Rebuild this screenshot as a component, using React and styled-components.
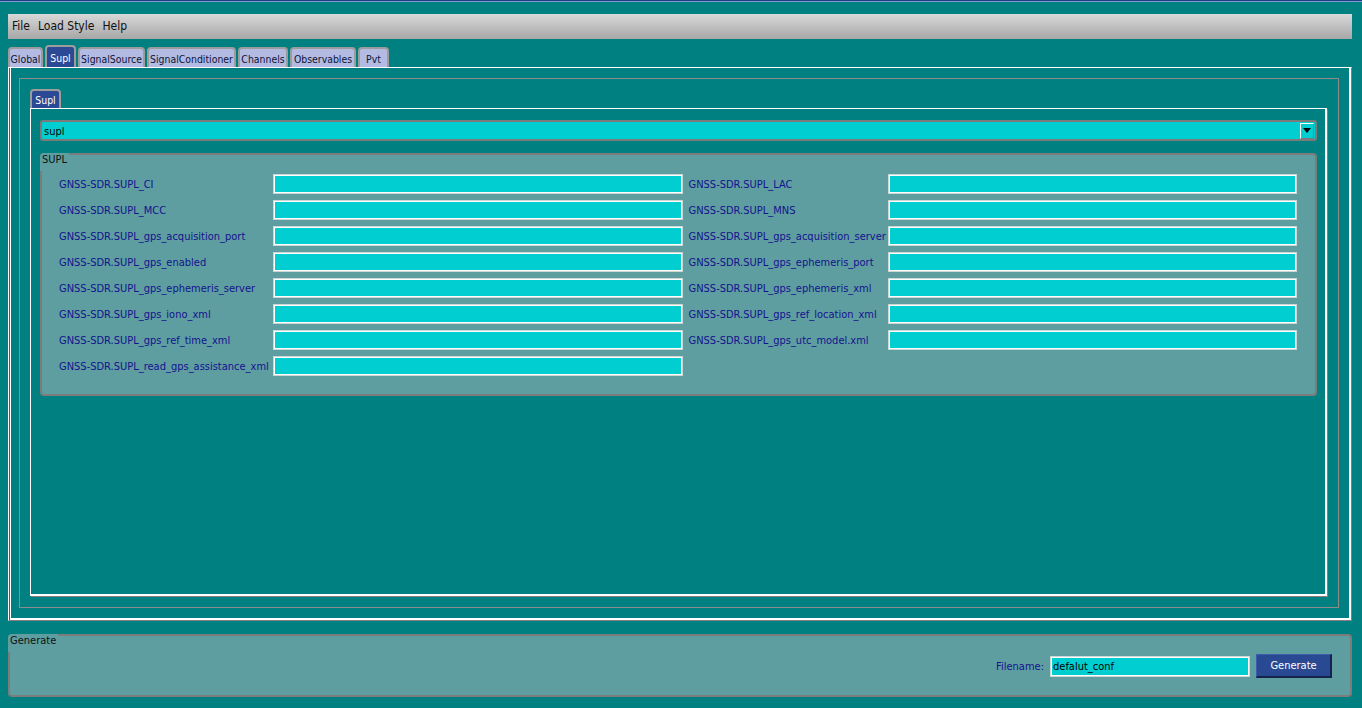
import React from 'react';
import styled, { createGlobalStyle } from 'styled-components';

const FONT = `"DejaVu Sans Condensed", "DejaVu Sans", "Liberation Sans", sans-serif`;

const GlobalStyle = createGlobalStyle`
  html, body { margin: 0; padding: 0; background: #008080; }
  body { font-family: ${FONT}; font-size: 11px; overflow: hidden; }
  * { box-sizing: border-box; }
`;

const Window = styled.div`
  width: 1362px;
  height: 708px;
  background: #008080;
  border-top: 1px solid #1f3f85;
  box-shadow: inset 0 1px 0 #7d9bc9;
  padding: 13px 10px 11px 8px;
  display: flex;
  flex-direction: column;
`;

const MenuBar = styled.div`
  height: 25px;
  display: flex;
  align-items: center;
  gap: 8px;
  padding-left: 4px;
  background: linear-gradient(#d8d8d8, #a7a7a7);
  font-size: 12px;
  color: #111;
`;

const MenuItem = styled.span`
  line-height: 25px;
`;

const TabBar = styled.div`
  display: flex;
  align-items: flex-end;
  gap: 2px;
  height: ${(p) => p.$h}px;
  margin-top: ${(p) => p.$mt || 0}px;
`;

const Tab = styled.div`
  flex: none;
  min-width: 0;
  width: ${(p) => p.$w}px;
  height: ${(p) => (p.$active ? p.$h + 2 : p.$h)}px;
  display: flex;
  align-items: center;
  justify-content: center;
  overflow: hidden;
  white-space: nowrap;
  font-size: 10.4px;
  border: 2px solid #9c9c9c;
  border-bottom: none;
  border-radius: 4px 4px 0 0;
  background: ${(p) => (p.$active ? '#2b4995' : '#b3bbe2')};
  color: ${(p) => (p.$active ? '#ffffff' : '#0e1236')};
  padding-top: 1px;
`;

const OuterPanel = styled.div`
  height: 556px;
  border-top: 1px solid #fff;
  border-left: 1px solid #fff;
  border-right: 1px solid #808080;
  border-bottom: 1px solid #808080;
  box-shadow: inset 1px 0 0 #008080, inset 2px 0 0 #fff, inset -2px -2px 0 #fff;
  padding: 10px 12px 12px 10px;
  display: flex;
`;

const Frame = styled.div`
  flex: 1;
  border: 1px solid #8c8c8c;
  padding: 10px;
  display: flex;
  flex-direction: column;
`;

const InnerPanel = styled.div`
  flex: 1;
  margin-right: 1px;
  margin-bottom: 1px;
  border-top: 1px solid #fff;
  border-left: 1px solid #fff;
  border-right: 2px solid #fff;
  border-bottom: 2px solid #fff;
  box-shadow: 1px 1px 0 #808080;
  padding: 11px 8px 8px 9px;
  display: flex;
  flex-direction: column;
`;

const Combo = styled.div`
  height: 21px;
  border: 2px solid #7b7b7b;
  border-radius: 3px;
  background: #00ced1;
  display: flex;
  align-items: center;
  justify-content: space-between;
  padding: 0 1px 0 2px;
  color: #000;
`;

const ComboText = styled.span`
  padding-top: 1px;
`;

const DropButton = styled.div`
  width: 14px;
  height: 16px;
  border-top: 1px solid #fff;
  border-left: 1px solid #fff;
  border-right: 1px solid #7a7a7a;
  border-bottom: 1px solid #7a7a7a;
  display: flex;
  align-items: center;
  justify-content: center;
`;

const Triangle = styled.div`
  width: 0;
  height: 0;
  border-left: 4px solid transparent;
  border-right: 4px solid transparent;
  border-top: 5px solid #000;
`;

const GroupBox = styled.div`
  position: relative;
  flex: none;
  background: #5f9ea0;
  border: 2px solid #7c7c7c;
  border-radius: 4px;
  margin-top: ${(p) => p.$mt || 0}px;
  height: ${(p) => p.$h}px;
`;

const Legend = styled.div`
  position: absolute;
  top: -2px;
  left: -2px;
  padding: 1px 2px 5px 2px;
  background: #5f9ea0;
  color: #0b1414;
  line-height: 12px;
  border-top-left-radius: 4px;
`;

const FieldGrid = styled.div`
  display: grid;
  grid-template-columns: 208px 1fr 193px 1fr;
  grid-auto-rows: 20px;
  column-gap: 6px;
  row-gap: 6px;
  padding: 19px 18px 17px 17px;
`;

const FieldLabel = styled.label`
  display: flex;
  align-items: center;
  color: #13138e;
  white-space: nowrap;
  grid-column: ${(p) => (p.$right ? 3 : 1)};
`;

const Field = styled.input`
  height: 20px;
  width: 100%;
  margin: 0;
  border: 1px solid #cfd6d6;
  box-shadow: inset 0 0 0 1px #ffffff;
  background: #00ced1;
  font: inherit;
  color: #000;
  padding: 0 2px;
  outline: none;
  grid-column: ${(p) => (p.$right ? 4 : 2)};
`;

const Spacer = styled.div`
  flex: 1;
`;

const GenerateRow = styled.div`
  height: 100%;
  display: flex;
  align-items: center;
  justify-content: flex-end;
  padding-right: 18px;
  padding-top: 1px;
`;

const FileLabel = styled.span`
  color: #13138e;
  margin-right: 6px;
`;

const FileInput = styled.input`
  width: 200px;
  height: 21px;
  margin: 0 6px 0 0;
  border: 1px solid #cfd6d6;
  box-shadow: inset 0 0 0 1px #ffffff;
  background: #00ced1;
  font: inherit;
  color: #000;
  padding: 0 2px;
  outline: none;
`;

const GenButton = styled.button`
  width: 76px;
  height: 24px;
  margin: 0;
  background: #2a4993;
  color: #fff;
  font: inherit;
  border-top: 1px solid #3b5cab;
  border-left: 1px solid #3b5cab;
  border-right: 2px solid #13234c;
  border-bottom: 2px solid #13234c;
  padding: 0;
`;

const mainTabs = [
  ['Global', 35],
  ['Supl', 31, true],
  ['SignalSource', 67],
  ['SignalConditioner', 89],
  ['Channels', 50],
  ['Observables', 66],
  ['Pvt', 31],
];

const leftFields = [
  'GNSS-SDR.SUPL_CI',
  'GNSS-SDR.SUPL_MCC',
  'GNSS-SDR.SUPL_gps_acquisition_port',
  'GNSS-SDR.SUPL_gps_enabled',
  'GNSS-SDR.SUPL_gps_ephemeris_server',
  'GNSS-SDR.SUPL_gps_iono_xml',
  'GNSS-SDR.SUPL_gps_ref_time_xml',
  'GNSS-SDR.SUPL_read_gps_assistance_xml',
];

const rightFields = [
  'GNSS-SDR.SUPL_LAC',
  'GNSS-SDR.SUPL_MNS',
  'GNSS-SDR.SUPL_gps_acquisition_server',
  'GNSS-SDR.SUPL_gps_ephemeris_port',
  'GNSS-SDR.SUPL_gps_ephemeris_xml',
  'GNSS-SDR.SUPL_gps_ref_location_xml',
  'GNSS-SDR.SUPL_gps_utc_model.xml',
];

export default function App() {
  return (
    <>
      <GlobalStyle />
      <Window>
        <MenuBar>
          <MenuItem>File</MenuItem>
          <MenuItem>Load Style</MenuItem>
          <MenuItem>Help</MenuItem>
        </MenuBar>
        <TabBar $h={22} $mt={6}>
          {mainTabs.map(([name, w, active]) => (
            <Tab key={name} $w={w} $h={20} $active={active}>
              {name}
            </Tab>
          ))}
        </TabBar>
        <OuterPanel>
          <Frame>
            <TabBar $h={19}>
              <Tab $w={31} $h={17} $active>
                Supl
              </Tab>
            </TabBar>
            <InnerPanel>
              <Combo>
                <ComboText>supl</ComboText>
                <DropButton>
                  <Triangle />
                </DropButton>
              </Combo>
              <GroupBox $mt={12} $h={243}>
                <Legend>SUPL</Legend>
                <FieldGrid>
                  {leftFields.map((f, i) => (
                    <React.Fragment key={f}>
                      <FieldLabel style={{ gridRow: i + 1 }}>{f}</FieldLabel>
                      <Field style={{ gridRow: i + 1 }} readOnly />
                      {rightFields[i] && (
                        <>
                          <FieldLabel $right style={{ gridRow: i + 1 }}>
                            {rightFields[i]}
                          </FieldLabel>
                          <Field $right style={{ gridRow: i + 1 }} readOnly />
                        </>
                      )}
                    </React.Fragment>
                  ))}
                </FieldGrid>
              </GroupBox>
              <Spacer />
            </InnerPanel>
          </Frame>
        </OuterPanel>
        <GroupBox $mt={13} $h={63}>
          <Legend>Generate</Legend>
          <GenerateRow>
            <FileLabel>Filename:</FileLabel>
            <FileInput defaultValue="defalut_conf" />
            <GenButton>Generate</GenButton>
          </GenerateRow>
        </GroupBox>
      </Window>
    </>
  );
}
